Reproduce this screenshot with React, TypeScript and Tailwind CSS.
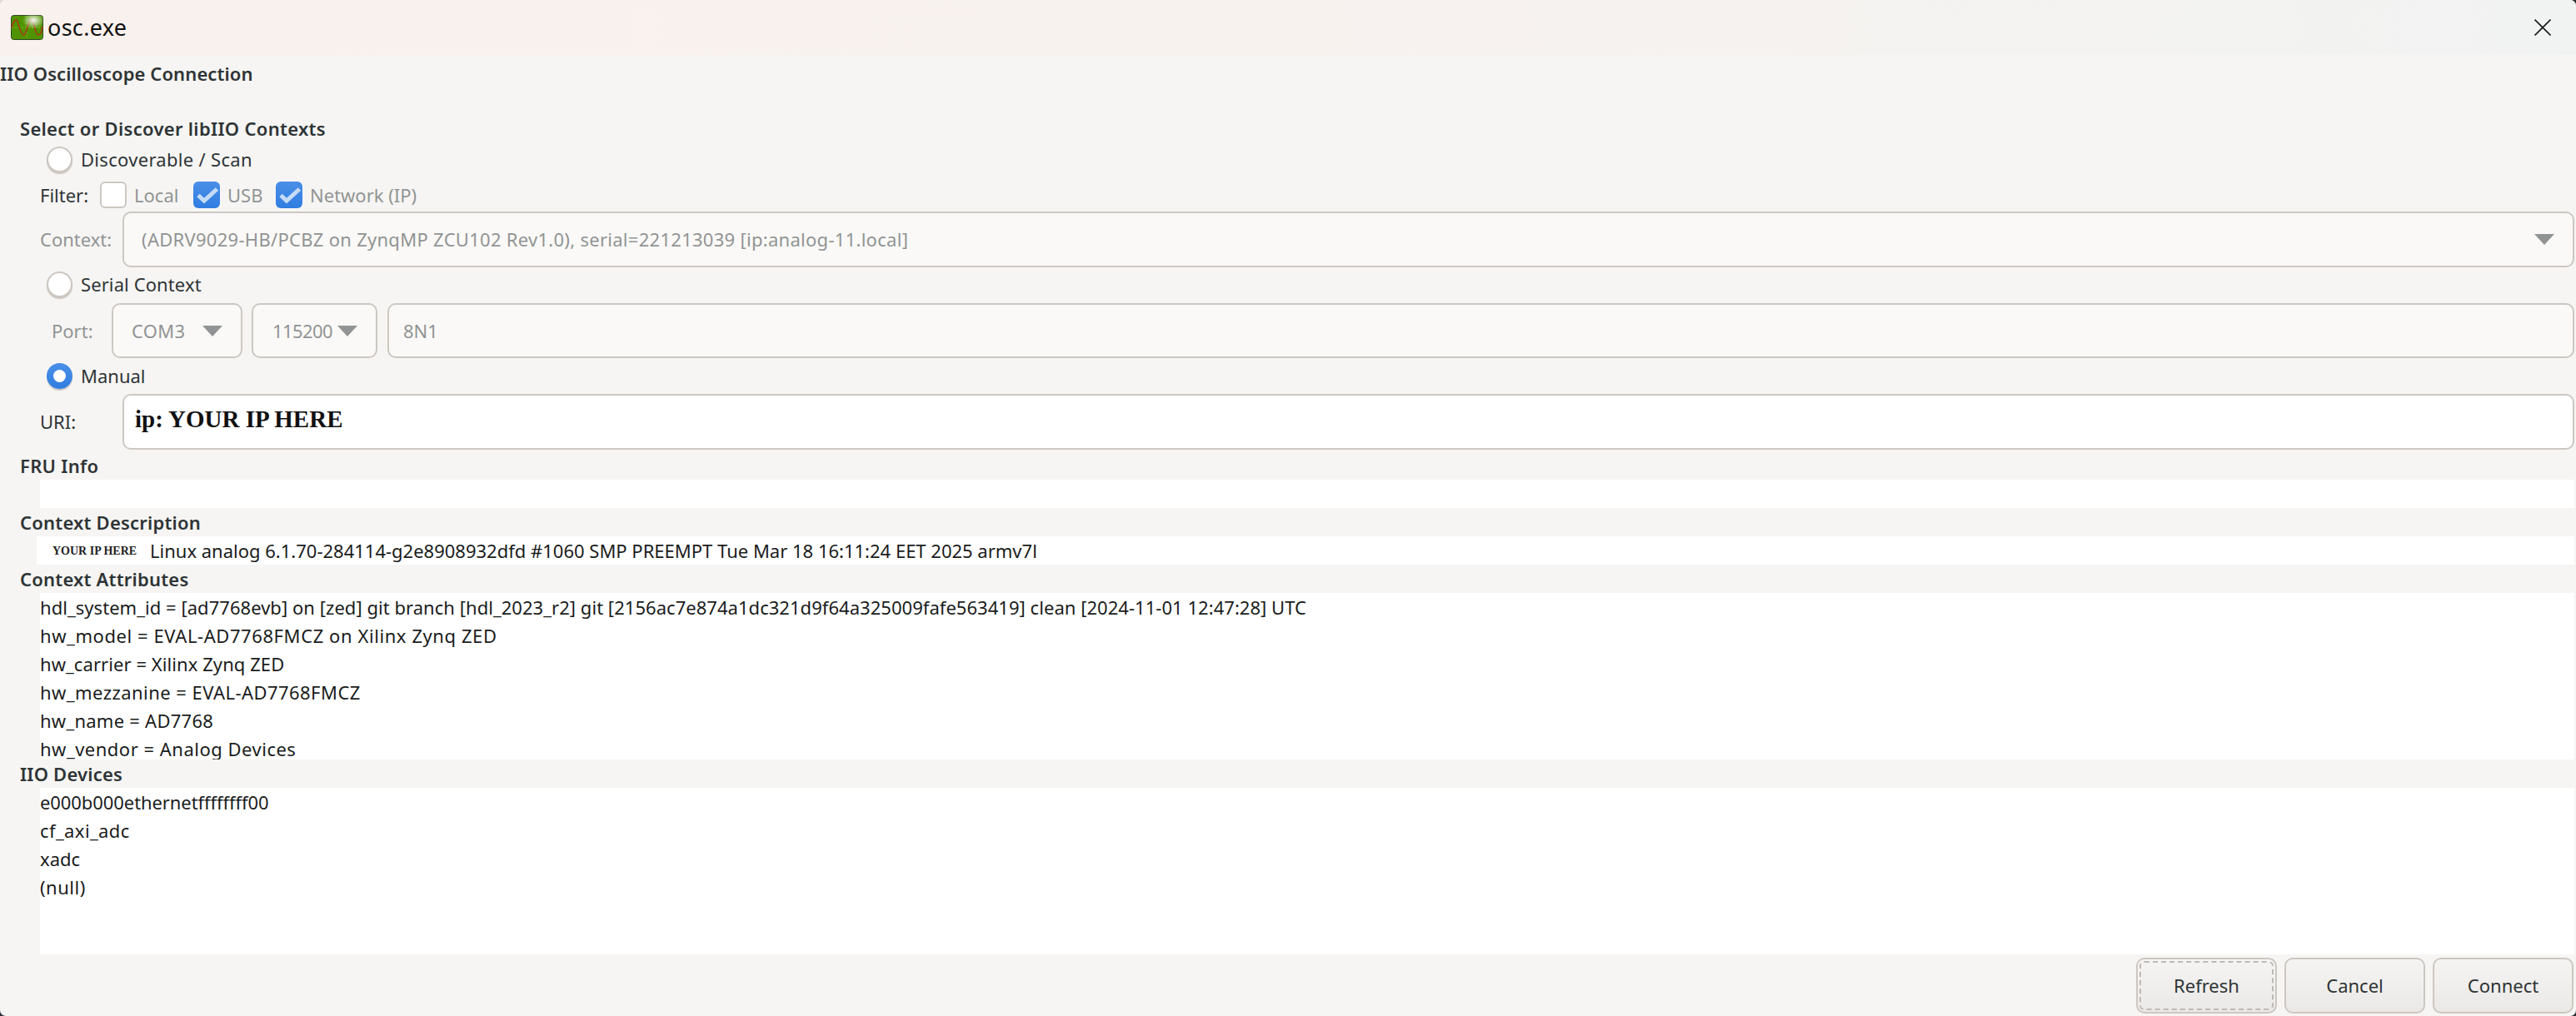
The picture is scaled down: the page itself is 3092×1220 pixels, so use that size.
const font = "font-['Noto_Sans','Open_Sans',sans-serif]"

function Radio({ checked }: { checked?: boolean }) {
  return (
    <span className={`w-[31px] h-[31px] rounded-full shrink-0 shadow-[0_2px_1px_#cdc7c2] ${checked ? 'bg-gradient-to-b from-[#4a8fe8] to-[#2f7de0] flex items-center justify-center' : 'bg-white border-2 border-[#cdc7c2]'}`}>
      {checked && <span className="w-[15px] h-[15px] rounded-full bg-white" />}
    </span>
  )
}

function Check({ checked }: { checked?: boolean }) {
  return checked ? (
    <span className="w-[32px] h-[32px] rounded-[6px] bg-gradient-to-b from-[#4a8fe8] to-[#2f7de0] shrink-0">
      <svg width="32" height="32" viewBox="0 0 32 32" fill="none">
        <path d="M6 16.5l7 6.5L28.5 9" stroke="#c5dbf8" strokeWidth="5" />
      </svg>
    </span>
  ) : (
    <span className="w-[32px] h-[32px] rounded-[6px] bg-white border-2 border-[#cdc7c2] shrink-0" />
  )
}

function Arrow() {
  return (
    <svg width="24" height="13" viewBox="0 0 24 13" className="shrink-0">
      <path d="M0 0h24L12 13z" fill="#919494" />
    </svg>
  )
}

function Section({ title, className }: { title: string; className: string }) {
  return (
    <div className={`pl-[24px] flex items-center font-semibold text-[#2e3436] ${className}`}>{title}</div>
  )
}

function Btn({ label, focus }: { label: string; focus?: boolean }) {
  return (
    <button
      className={`w-[169px] h-[67px] rounded-[10px] border-2 border-[#cdc7c2] bg-gradient-to-b from-[#f5f4f2] to-[#ebe9e7] text-[#2e3436] ${focus ? 'outline-2 outline-dashed outline-[#bdbab6] -outline-offset-[6px]' : ''}`}
    >
      {label}
    </button>
  )
}

function Lines({ items }: { items: [string, string][] }) {
  return (
    <>
      {items.map(([t, track]) => (
        <div key={t} className={`h-[34px] leading-[34px] whitespace-nowrap text-[#1a1c1c] ${track}`}>{t}</div>
      ))}
    </>
  )
}

export default function App() {
  return (
    <div className="w-[3092px] h-[1220px] bg-[linear-gradient(135deg,#dcdcdc_50px,#2b3136_50px)]">
      <div className={`w-full h-full overflow-hidden rounded-[7px] bg-[#f6f5f3] text-[22px] text-[#2e3436] flex flex-col ${font}`}>
        {/* title bar */}
        <div className="h-[66px] shrink-0 flex items-center bg-gradient-to-r from-[#f9f1ee] via-[#f8f2ef] to-[#f1f3f2] pl-[13px] pr-[30px]">
          <svg width="39" height="30" viewBox="0 0 39 30" className="shrink-0">
            <defs>
              <radialGradient id="glare" cx="0.7" cy="0.2" r="0.35">
                <stop offset="0" stopColor="#ffffff" stopOpacity="0.95" />
                <stop offset="1" stopColor="#ffffff" stopOpacity="0" />
              </radialGradient>
            </defs>
            <rect x="0.5" y="0.5" width="38" height="29" rx="3" fill="#4f9300" stroke="#2d4a20" />
            <path d="M1 15h37M19 1v28" stroke="#8fb820" strokeWidth="1" strokeDasharray="2 2" />
            <path d="M1 15C3 8 5 5 7 6s4 17 8 18 5-16 9-18 5 18 9 18 4-8 5-10" fill="none" stroke="#a83a1a" strokeWidth="1.6" />
            <rect x="0.5" y="0.5" width="38" height="29" rx="3" fill="url(#glare)" />
          </svg>
          <span className="ml-[5px] text-[27px] tracking-[0.3px] text-[#111]">osc.exe</span>
          <svg width="20" height="20" viewBox="0 0 20 20" className="ml-auto">
            <path d="M0.5 0.5l19 19M19.5 0.5l-19 19" stroke="#1b1b1b" strokeWidth="1.6" />
          </svg>
        </div>

        {/* main */}
        <div className="h-[44px] flex items-center font-semibold tracking-[0.1px]">IIO Oscilloscope Connection</div>

        <div className="flex flex-col pr-[2px]">
          <Section title="Select or Discover libIIO Contexts" className="mt-[27px] h-[34px] tracking-[0.3px]" />
          <div className="mt-[3px] h-[34px] pl-[56px] flex items-center gap-[10px]">
            <Radio />
            <span className="tracking-[0.3px]">Discoverable / Scan</span>
          </div>
          <div className="mt-[7px] h-[38px] pl-[48px] flex items-center">
            <span className="w-[72px]">Filter:</span>
            <Check />
            <span className="ml-[9px] w-[71px] text-[#919494]">Local</span>
            <Check checked />
            <span className="ml-[9px] w-[58px] text-[#919494]">USB</span>
            <Check checked />
            <span className="ml-[9px] text-[#919494]">Network (IP)</span>
          </div>
          <div className="mt-[1px] h-[67px] pl-[48px] flex items-center">
            <span className="w-[99px] text-[#919494]">Context:</span>
            <div className="flex-1 h-full rounded-[10px] border-2 border-[#cdc7c2] bg-[#faf9f7] flex items-center pl-[21px] pr-[22px] text-[#919494]">
              <span className="tracking-[0.28px]">(ADRV9029-HB/PCBZ on ZynqMP ZCU102 Rev1.0), serial=221213039 [ip:analog-11.local]</span>
              <span className="ml-auto"><Arrow /></span>
            </div>
          </div>
          <div className="mt-[3px] h-[34px] pl-[56px] flex items-center gap-[10px]">
            <Radio />
            <span className="tracking-[0.1px]">Serial Context</span>
          </div>
          <div className="mt-[6px] h-[66px] pl-[62px] flex items-center text-[#919494]">
            <span className="w-[72px]">Port:</span>
            <div className="w-[157px] h-full rounded-[10px] border-2 border-[#cdc7c2] bg-[#faf9f7] flex items-center justify-between pl-[22px] pr-[22px]">
              <span className="tracking-[0.3px]">COM3</span>
              <Arrow />
            </div>
            <div className="ml-[11px] w-[151px] h-full rounded-[10px] border-2 border-[#cdc7c2] bg-[#faf9f7] flex items-center justify-between pl-[23px] pr-[22px]">
              <span className="tracking-[-0.6px]">115200</span>
              <Arrow />
            </div>
            <div className="ml-[12px] flex-1 h-full rounded-[10px] border-2 border-[#cdc7c2] bg-[#faf9f7] flex items-center pl-[17px]">8N1</div>
          </div>
          <div className="mt-[4px] h-[34px] pl-[56px] flex items-center gap-[10px]">
            <Radio checked />
            <span>Manual</span>
          </div>
          <div className="mt-[5px] h-[67px] pl-[48px] flex items-center">
            <span className="w-[99px]">URI:</span>
            <div className="flex-1 h-full rounded-[10px] border-2 border-[#cdc7c2] bg-white flex items-center pl-[13px] font-['Liberation_Serif',serif] font-bold text-[29px] text-[#111]">
              <span className="-mt-[5px]">ip: YOUR IP HERE</span>
            </div>
          </div>

          <Section title="FRU Info" className="h-[34px] mt-[2px] tracking-[0.3px]" />
          <div className="ml-[48px] h-[34px] bg-white" />
          <Section title="Context Description" className="h-[34px] tracking-[0.2px]" />
          <div className="ml-[44px] h-[34px] bg-white flex items-center whitespace-nowrap text-[#1a1c1c]">
            <span className="ml-[19px] w-[117px] font-['Liberation_Serif',serif] font-bold text-[14px] text-[#222]">YOUR IP HERE</span>
            <span>Linux analog 6.1.70-284114-g2e8908932dfd #1060 SMP PREEMPT Tue Mar 18 16:11:24 EET 2025 armv7l</span>
          </div>
          <Section title="Context Attributes" className="h-[34px] tracking-[0.2px]" />
          <div className="ml-[48px] h-[200px] bg-white overflow-hidden">
            <Lines
              items={[
                ['hdl_system_id = [ad7768evb] on [zed] git branch [hdl_2023_r2] git [2156ac7e874a1dc321d9f64a325009fafe563419] clean [2024-11-01 12:47:28] UTC', 'tracking-[0.04px]'],
                ['hw_model = EVAL-AD7768FMCZ on Xilinx Zynq ZED', 'tracking-[0.58px]'],
                ['hw_carrier = Xilinx Zynq ZED', 'tracking-[0.07px]'],
                ['hw_mezzanine = EVAL-AD7768FMCZ', 'tracking-[0.45px]'],
                ['hw_name = AD7768', 'tracking-[0.25px]'],
                ['hw_vendor = Analog Devices', 'tracking-[0.5px]'],
              ]}
            />
          </div>
          <Section title="IIO Devices" className="h-[34px] tracking-[0.2px]" />
          <div className="ml-[48px] h-[200px] bg-white overflow-hidden">
            <Lines
              items={[
                ['e000b000ethernetffffffff00', 'tracking-[-0.08px]'],
                ['cf_axi_adc', 'tracking-[0.4px]'],
                ['xadc', ''],
                ['(null)', 'tracking-[0.5px]'],
              ]}
            />
          </div>
          <div className="mt-[4px] flex justify-end gap-[9px] pr-[1px]">
            <Btn label="Refresh" focus />
            <Btn label="Cancel" />
            <Btn label="Connect" />
          </div>
        </div>
      </div>
    </div>
  )
}
